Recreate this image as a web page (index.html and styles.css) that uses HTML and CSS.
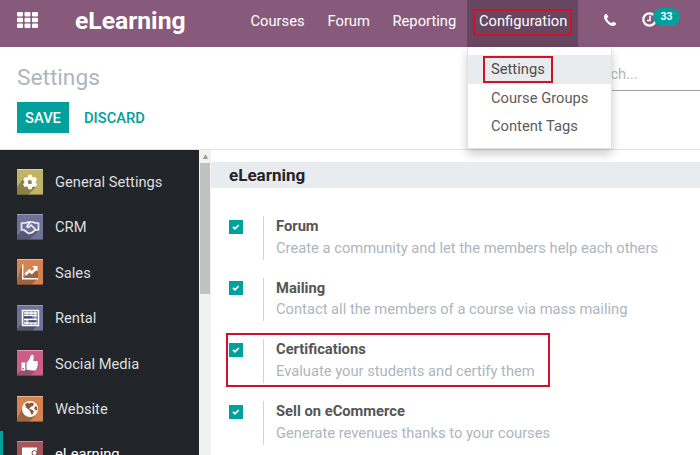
FILE: index.html
```html
<!DOCTYPE html>
<html lang="en">
<head>
<meta charset="utf-8">
<title>eLearning Settings</title>
<link rel="stylesheet" href="styles.css">
</head>
<body>
<header class="navbar">
  <svg class="apps" viewBox="0 0 21 16" fill="#fff"><rect width="6" height="4.5" rx="1"/><rect x="7.5" width="6" height="4.5" rx="1"/><rect x="15" width="6" height="4.5" rx="1"/><rect y="5.8" width="6" height="4.5" rx="1"/><rect x="7.5" y="5.8" width="6" height="4.5" rx="1"/><rect x="15" y="5.8" width="6" height="4.5" rx="1"/><rect y="11.5" width="6" height="4.5" rx="1"/><rect x="7.5" y="11.5" width="6" height="4.5" rx="1"/><rect x="15" y="11.5" width="6" height="4.5" rx="1"/></svg>
  <div class="brand"><span>eLearning</span></div>
  <nav class="menu">
    <a class="courses"><span>Courses</span></a>
    <a class="forum"><span>Forum</span></a>
    <a class="reporting"><span>Reporting</span></a>
    <div class="config"><a class="outlined"><span>Configuration</span></a>
      <div class="dropdown">
        <a class="active"><span>Settings</span></a>
        <a><span>Course Groups</span></a>
        <a><span>Content Tags</span></a>
      </div>
    </div>
  </nav>
  <svg class="phone" viewBox="0 0 1408 1408" fill="#fff"><path d="M1408 1112q0 27-10 70.500t-21 68.500q-21 50-122 106-94 51-186 51-27 0-53-3.500t-57.500-12.500-47-14.500-55.500-20.500-49-18q-98-35-175-83-127-79-264-216t-216-264q-48-77-83-175-3-9-18-49t-20.500-55.500-14.500-47-12.500-57.500-3.500-53q0-92 51-186 56-101 106-122 25-11 68.500-21t70.500-10q14 0 21 3 18 6 53 76 11 19 30 54t35 63.500 31 53.500q3 4 17.500 25t21.500 35.500 7 28.500q0 20-28.500 50t-62 55-62 53-28.500 46q0 9 5 22.500t8.500 20.500 14 24 11.500 19q76 137 174 235t235 174q2 1 19 11.500t24 14 20.500 8.500 22.500 5q18 0 46-28.500t53-62 55-62 50-28.500q14 0 28.500 7t35.500 21.500 25 17.500q25 15 53.500 31t63.500 35 54 30q70 35 76 53 3 7 3 21z"/></svg>
  <div class="activity">
    <svg viewBox="0 0 15 15" fill="none" stroke="#fff"><circle cx="7.500" cy="7.500" r="6.200" stroke-width="2.200"/><path d="M8 3.600v4.800H5" stroke-width="1.500"/></svg>
    <b class="badge">33</b>
  </div>
</header>
<section class="control">
  <div class="left">
    <h1><span>Settings</span></h1>
    <div class="buttons"><button class="save"><span>SAVE</span></button><button class="discard"><span>DISCARD</span></button></div>
  </div>
  <div class="search"><span>Search...</span></div>
</section>
<main class="body">
  <aside class="sidebar">
    <a class="tab"><svg viewBox="0 0 26 26"><rect width="26" height="26" rx="1" fill="#c1b467"/><path d="M0 18 8 7 19 18 11 26H0z" fill="#8a8149"/><path d="M0 .5h26" stroke="#dbd29b"/><path d="M0 25.500h26" stroke="#5a5532" opacity=".6"/><circle cx="13" cy="13" r="4" fill="none" stroke="#fff" stroke-width="3.600"/><path d="M13 5.800v3M13 17.200v3M6.800 9.400l2.500 1.500M16.700 15.100l2.500 1.500M6.800 16.600l2.500-1.500M16.700 10.900l2.500-1.500" stroke="#fff" stroke-width="3.600"/></svg><span>General Settings</span></a>
    <a class="tab"><svg viewBox="0 0 26 26"><rect width="26" height="26" rx="1" fill="#6e7299"/><path d="M0 21 5 17 15 18 21 17 12 26H0z" fill="#555870"/><path d="M0 .5h26" stroke="#9396b5"/><path d="M0 25.500h26" stroke="#3b3d50" opacity=".6"/><path d="M4.500 8.500v8M21.500 8.500v8M5 9h4l2-1h5l2 1h3M5 16h2l4 3q2 1 3-.5 2 .5 2.500-1.500 2 0 1.500-2l-4-4-2 2q-2 1-2-1l3-3.500M18 16h3" fill="none" stroke="#f4f3f7" stroke-width="1.600" stroke-linejoin="round"/></svg><span>CRM</span></a>
    <a class="tab"><svg viewBox="0 0 26 26"><rect width="26" height="26" rx="1" fill="#d6834f"/><path d="M0 22 5 6 7 18 11 15 21 11V19L14 26H0z" fill="#9e643f"/><path d="M0 .5h26" stroke="#edb28e"/><path d="M0 25.500h26" stroke="#6c4026" opacity=".6"/><path d="M5.700 5.500v14.300H21" fill="none" stroke="#fff" stroke-width="1.400"/><path d="m8.500 15.500 4-4 2.300 2.300 4-4" fill="none" stroke="#fff" stroke-width="2.500"/><path d="M15 7h5.500v5.500z" fill="#fff"/></svg><span>Sales</span></a>
    <a class="tab"><svg viewBox="0 0 26 26"><rect width="26" height="26" rx="1" fill="#6e7299"/><path d="M0 24 5 18 21 20 15 26H0z" fill="#505368"/><path d="M0 .5h26" stroke="#9396b5"/><path d="M0 25.500h26" stroke="#3b3d50" opacity=".6"/><rect x="5.500" y="5.500" width="16" height="15" fill="#777a96" stroke="#fff" stroke-width="1.500"/><path d="M7 8h13M7 10.500h13M7 14.500h13M7 18h13" stroke="#fff" stroke-width="1.500"/><path d="M10 6v14M14 6v14M18 6v14" stroke="#fff" stroke-width=".8"/><path d="M7 12.300h8M12 16.300h7" stroke="#454961" stroke-width="2"/></svg><span>Rental</span></a>
    <a class="tab"><svg viewBox="0 0 26 26"><rect width="26" height="26" rx="1" fill="#cc5f84"/><path d="M0 24 5 19 14 6 20 19 13 26H0z" fill="#96506a"/><path d="M0 .5h26" stroke="#e69bb4"/><path d="M0 25.500h26" stroke="#672f42" opacity=".6"/><path d="M4.500 12.500h3.800v8H4.500zM9.500 12.500q3-2 3.800-5.500.3-2.500 2-2.500 2.200.5.900 6.500h3.300q2 .4 1 2.600 1 1.500-.3 2.500.5 1.700-.6 2.500 0 1.900-2 1.900-4.500.3-8.100-1z" fill="#fff"/><circle cx="6.200" cy="18.500" r=".8" fill="#96506a"/></svg><span>Social Media</span></a>
    <a class="tab"><svg viewBox="0 0 26 26"><rect width="26" height="26" rx="1" fill="#d6834f"/><path d="M0 23 7 8 19 19 12 26H0z" fill="#9e643f"/><path d="M0 .5h26" stroke="#edb28e"/><path d="M0 25.500h26" stroke="#6c4026" opacity=".6"/><circle cx="13" cy="13" r="8" fill="#fff"/><path d="m8 8 3-1.500 1 1.200 2-1.200 3 1-1 2.500-2 .8-2 2 3 1 2 1.500-2 4-1.500-3-1-2-3.500-2.800zM18 10l2 1 .3 3-1.500.5-1.500-2z" fill="#8d5638"/></svg><span>Website</span></a>
    <a class="tab current"><svg viewBox="0 0 26 26"><rect width="26" height="26" rx="1" fill="#a5565a"/><path d="M0 22 5 16 18 22V26H0z" fill="#713f43"/><path d="M0 .5h26" stroke="#c78d8f"/><path d="M5 6.500h15v6l-4 4H5z" fill="#fff"/><circle cx="17.500" cy="12" r="2.500" fill="#fff" stroke="#8d484c"/><path d="M12.500 20q0-4.500 5-4.500t5 4.500z" fill="#fff" stroke="#8d484c"/></svg><span>eLearning</span></a>
  </aside>
  <div class="scroll"><i class="arrow"></i><div class="thumb"></div></div>
  <section class="content">
    <h2><span>eLearning</span></h2>
    <div class="settings">
      <div class="setting"><svg class="check" viewBox="0 0 14 14"><rect width="14" height="14" fill="#00a09d"/><path d="m4 6.800 2 2L9.800 5" fill="none" stroke="#fff" stroke-width="1.700"/></svg><div class="text"><b>Forum</b><p>Create a community and let the members help each others</p></div></div>
      <div class="setting"><svg class="check" viewBox="0 0 14 14"><rect width="14" height="14" fill="#00a09d"/><path d="m4 6.800 2 2L9.800 5" fill="none" stroke="#fff" stroke-width="1.700"/></svg><div class="text"><b>Mailing</b><p>Contact all the members of a course via mass mailing</p></div></div>
      <div class="setting marked"><svg class="check" viewBox="0 0 14 14"><rect width="14" height="14" fill="#00a09d"/><path d="m4 6.800 2 2L9.800 5" fill="none" stroke="#fff" stroke-width="1.700"/></svg><div class="text"><b>Certifications</b><p>Evaluate your students and certify them</p></div></div>
      <div class="setting"><svg class="check" viewBox="0 0 14 14"><rect width="14" height="14" fill="#00a09d"/><path d="m4 6.800 2 2L9.800 5" fill="none" stroke="#fff" stroke-width="1.700"/></svg><div class="text"><b>Sell on eCommerce</b><p>Generate revenues thanks to your courses</p></div></div>
    </div>
  </section>
</main>
</body>
</html>
```
FILE: styles.css
```css
* { box-sizing: border-box; }
body { margin: 0; width: 700px; height: 455px; overflow: hidden; display: flex; flex-direction: column; background: #fff; color: #555; font-family: Roboto, sans-serif; font-size: 14.72px; }
h1, h2, p { margin: 0; }
svg { display: block; flex: none; }
.navbar { height: 47px; flex: none; background: #875a7b; color: #fff; display: flex; align-items: flex-start; padding-left: 17px; }
.apps { width: 21px; height: 16px; margin-top: 12px; }
.brand { width: 175.500px; margin-left: 37px; font-size: 24.700px; font-weight: 700; line-height: 42px; }
.menu { display: flex; height: 47px; }
.menu a { line-height: 43px; white-space: nowrap; }
.courses { width: 77px; }
.forum { width: 65px; }
.reporting { width: 74.500px; }
.config { position: relative; width: 111px; height: 47px; background: #67465f; padding: 9px 0 0 6px; }
.menu .outlined { display: block; width: 99px; height: 27px; border: 2px solid #d0112b; line-height: 21px; padding-left: 4px; }
.dropdown { position: absolute; z-index: 2; left: 0; top: 47px; width: 145px; height: 102px; background: #fff; border: 1px solid #dee2e6; border-top: 0; padding-top: 8px; box-shadow: 0 5px 9px rgba(0,0,0,.2); color: #5b5b5b; }
.dropdown a { display: block; height: 28.500px; line-height: 29px; padding-left: 23px; }
.dropdown .active { background: #e9ecef; padding: 1px 0 0 15px; }
.dropdown .active span { display: block; width: 70px; height: 27px; border: 2px solid #d0112b; padding-left: 6px; line-height: 23px; color: #4c4c4c; }
.phone { width: 12px; height: 12px; margin: 14px 0 0 26px; }
.activity { position: relative; margin: 12px 0 0 26px; }
.activity svg { width: 15px; height: 15px; }
.badge { position: absolute; left: 11px; top: -4px; width: 27px; height: 18px; border-radius: 9px; background: #00a09d; font-size: 10.500px; line-height: 18px; text-align: center; }
.control { height: 103px; flex: none; display: flex; justify-content: space-between; padding-left: 17px; border-bottom: 1px solid #dee2e6; }
h1 { margin-top: 15px; color: #adb5bd; font-weight: 400; font-size: 22.700px; line-height: 31px; }
.buttons { display: flex; margin-top: 9px; }
button { border: 0; padding: 0; height: 31px; font: 500 14.7px/32px Roboto, sans-serif; }
.save { width: 52px; background: #00a09d; color: #fff; }
.discard { margin-left: 15px; background: none; color: #00a09d; }
.search { width: 119px; height: 44px; border-bottom: 1px solid #a0a0a0; padding-top: 18px; color: #b5b5b5; line-height: 18px; }
.body { flex: 1; min-height: 0; display: flex; overflow: hidden; }
.sidebar { width: 199px; background: #212529; color: #dedede; padding-top: 8.900px; }
.tab { height: 45.400px; display: flex; align-items: center; padding-left: 17px; gap: 12px; }
.tab span { padding-top: 1px; }
.tab svg { width: 26px; height: 26px; }
.current { border-left: 3px solid #00a09d; padding-left: 14px; color: #fff; }
.current span { padding-top: 0; }
.scroll { width: 12px; background: #f1f1f1; padding: 5px 0 0 1px; }
.arrow { display: block; margin: 0 0 4px 3px; width: 5px; border: 2.500px solid transparent; border-top: 0; border-bottom: 4px solid #9b9b9b; }
.thumb { width: 10px; height: 131px; background: #c1c1c1; }
.content { flex: 1; padding-top: 12px; }
h2 { height: 26px; background: #e9ecef; padding-left: 18px; color: #212529; font-size: 17px; font-weight: 700; line-height: 27px; }
.settings { padding: 22px 0 0 15px; }
.setting { height: 54px; margin-bottom: 7.700px; border: 2px solid transparent; display: flex; padding: 4px 0 0 1px; width: 324px; }
.marked { border-color: #d0112b; }
.check { width: 14px; height: 14px; margin-top: 3.700px; }
.text { margin-left: 20px; height: 43.500px; border-left: 1px solid #ced4da; padding-left: 12px; white-space: nowrap; line-height: 21.700px; }
.text b { font-weight: 700; }
.text p { color: #adb5bd; }
```
